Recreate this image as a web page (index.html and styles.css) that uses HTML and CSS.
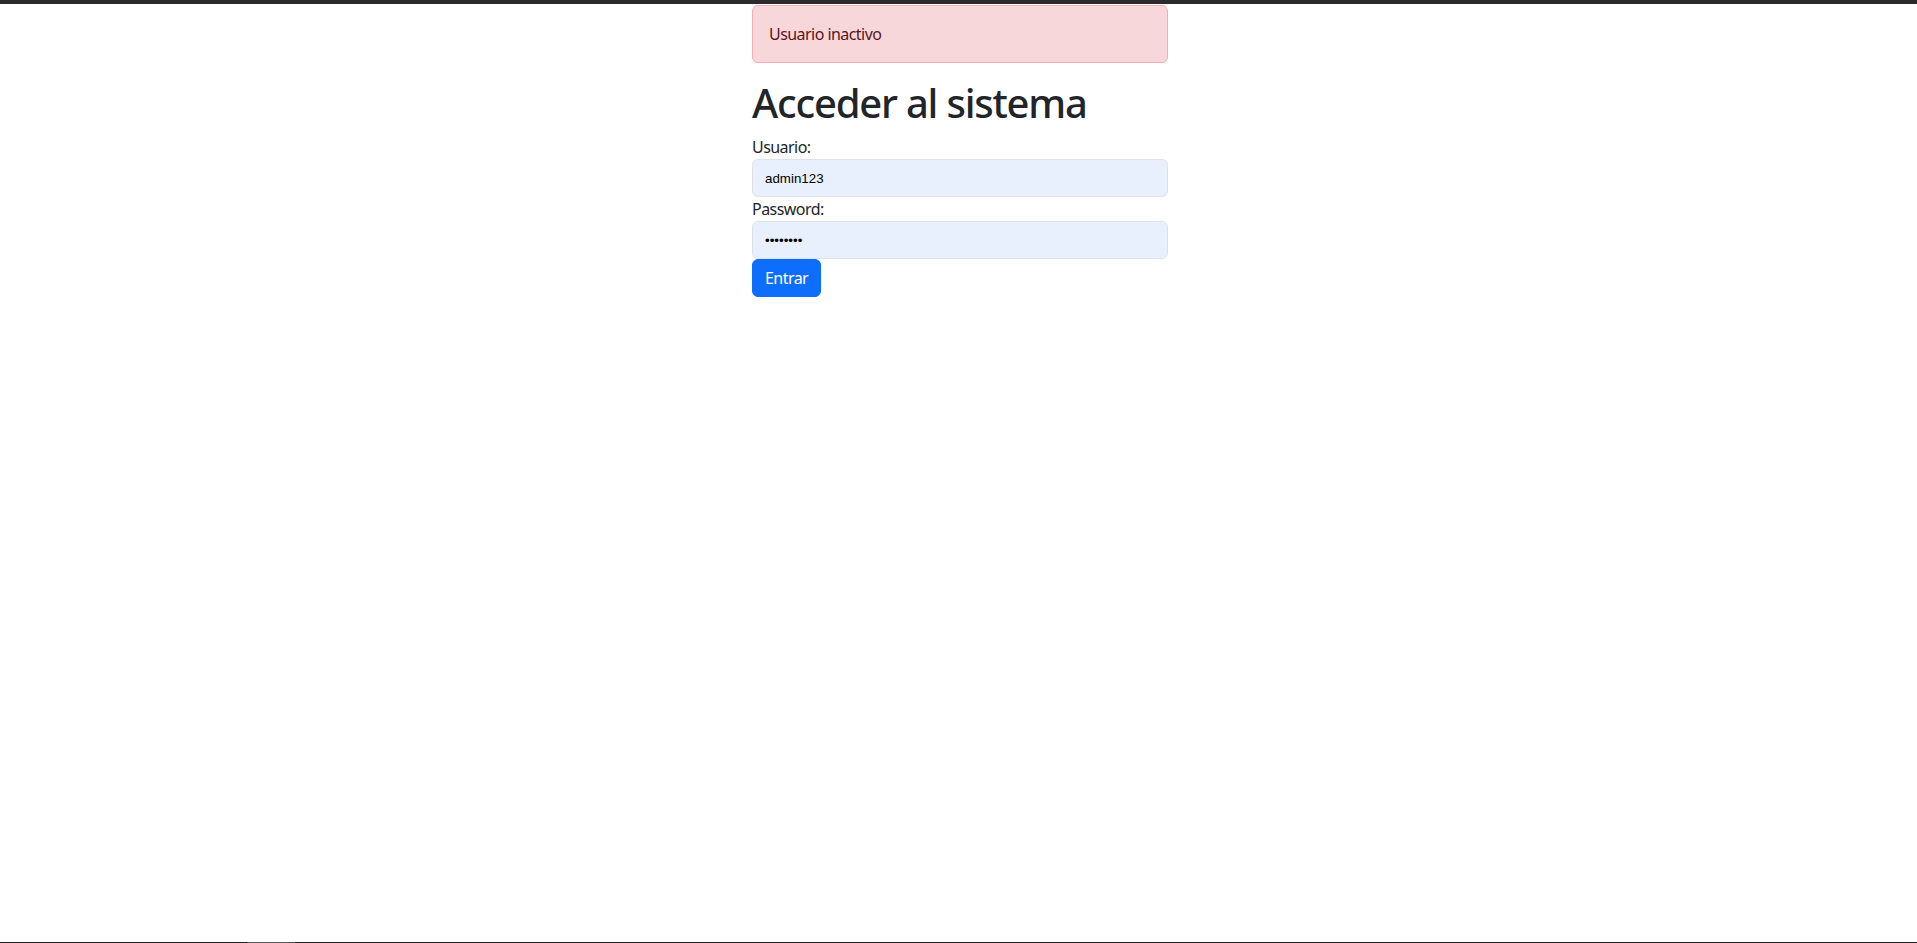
FILE: index.html
```html
<!DOCTYPE html>
<html lang="es">
<head>
<meta charset="utf-8">
<title>Acceder al sistema</title>
<link rel="stylesheet" href="styles.css">
</head>
<body>
<div class="topbar"></div>
<main class="page">
  <div class="login">
    <div class="alert">Usuario inactivo</div>
    <h1 class="title">Acceder al sistema</h1>
    <form class="form">
      <label class="label" for="usuario">Usuario:</label>
      <input class="control" id="usuario" type="text" value="admin123">
      <label class="label" for="password">Password:</label>
      <input class="control" id="password" type="password" value="12345678">
      <button class="btn" type="button">Entrar</button>
    </form>
  </div>
</main>
<div class="bottombar"><span class="thumb"></span></div>
</body>
</html>
```

FILE: styles.css
```css
* { box-sizing: border-box; }
html, body { margin: 0; padding: 0; height: 100%; }
body {
  background: #fff;
  color: #212529;
  font-family: "Noto Sans", "Open Sans", sans-serif;
  font-size: 16px;
  line-height: 1.5;
  letter-spacing: -0.55px;
  display: flex;
  flex-direction: column;
}
.topbar {
  height: 4px;
  background: #2b2b2b;
  flex: none;
}
.page {
  flex: 1;
  padding-top: 1px;
}
.login {
  width: 416px;
  margin-left: calc(50% - 206.5px);
}
.alert {
  background: #f8d7da;
  border: 1px solid #f1aeb5;
  color: #58151c;
  border-radius: 6px;
  padding: 16px;
  margin-bottom: 16px;
}
.title {
  font-size: 40px;
  font-weight: 500;
  line-height: 1.2;
  letter-spacing: -1.2px;
  margin: 0 0 8px;
}
.form { display: flex; flex-direction: column; align-items: flex-start; }
.label { display: block; }
.control {
  width: 100%;
  height: 38px;
  padding: 6px 12px;
  border: 1px solid #dee2e6;
  border-radius: 6px;
  background: #e8f0fe;
  color: #000;
  font-family: "Liberation Sans", Arial, sans-serif;
  font-size: 13.333px;
  letter-spacing: 0;
  outline: none;
}
.btn {
  height: 38px;
  padding: 6px 12px;
  border: 1px solid #0d6efd;
  border-radius: 6px;
  background: #0d6efd;
  color: #fff;
  font-family: inherit;
  font-size: 16px;
  line-height: 1.5;
  letter-spacing: -0.55px;
}
.bottombar {
  height: 1px;
  background: #202020;
  flex: none;
  position: relative;
}
.thumb {
  position: absolute;
  left: 247px;
  width: 48px;
  height: 1px;
  background: #555;
}
```
